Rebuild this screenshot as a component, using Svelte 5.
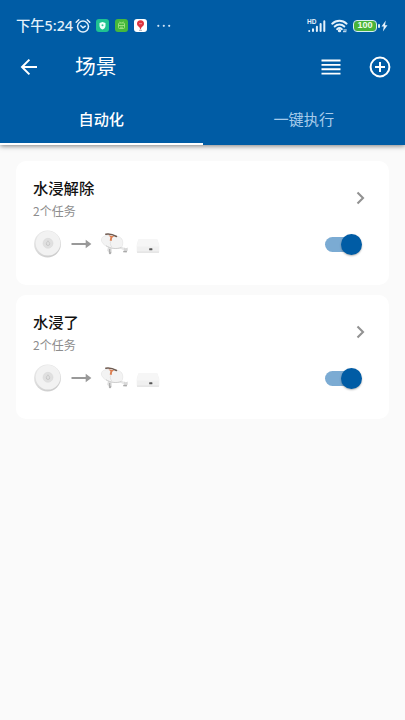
<script>
  let tab = $state(0);
  let scenes = $state([
    { name: '水浸解除', tasks: '2个任务', on: true },
    { name: '水浸了', tasks: '2个任务', on: true }
  ]);
</script>

<div class="screen">
  <header>
    <div class="status">
      <span class="time">下午5:24</span>
      <svg class="alarm" width="16" height="16" viewBox="0 0 16 16" fill="none" stroke="#e4f1fb" stroke-width="1.5" stroke-linecap="round">
        <circle cx="8" cy="8.6" r="5.5" />
        <path d="M1.200 4.200 3.800 1.700M14.800 4.200 12.200 1.700M5.800 7.800 8 9.800l2.300-1.600" />
      </svg>
      <svg class="app" width="13" height="13" viewBox="0 0 13 13">
        <rect width="13" height="13" rx="3" fill="#1fc291" />
        <path d="M6.500 3 9.500 4v2.700c0 2-1.500 3.100-3 3.800-1.500-.7-3-1.800-3-3.800V4z" fill="#f1fffa" />
        <circle cx="6.500" cy="6.200" r="1" fill="#35c596" />
      </svg>
      <svg class="app" width="13" height="13" viewBox="0 0 13 13">
        <rect width="13" height="13" rx="3" fill="#45b83b" />
        <g fill="none" stroke="#a5e286" stroke-width=".9">
          <rect x="3.500" y="4" width="6" height="5.500" rx="1" />
          <path d="M3.500 6.500h6M4.700 2.700l.6 1.200M8.300 2.700l-.6 1.200M5 8.200h3" />
        </g>
      </svg>
      <svg class="app" width="13" height="13" viewBox="0 0 13 13">
        <rect width="13" height="13" rx="3" fill="#fff" />
        <path d="M6.500 1.200a3.500 3.500 0 0 1 3.500 3.500c0 1.700-1.200 2.700-2.400 3.500L6.500 10.700 5.400 8.200C4.200 7.400 3 6.400 3 4.700a3.500 3.500 0 0 1 3.500-3.500z" fill="#dc3440" />
        <path d="M5 4.700h3" stroke="#f0939a" />
        <path d="M5 11.300h3" stroke="#8f8f98" stroke-width=".8" />
      </svg>
      <svg class="dots" width="15" height="4" viewBox="0 0 15 4" fill="#cfe4f6">
        <circle cx="1.300" cy="1.800" r="1.100" /><circle cx="6.800" cy="1.800" r="1.100" /><circle cx="12.200" cy="1.800" r="1.100" />
      </svg>
      <span class="grow"></span>
      <span class="signal">
        <i>HD</i>
        <svg width="19" height="14" viewBox="0 0 19 14" stroke="#e4f1fb" stroke-width="2" stroke-linecap="round">
          <path d="M2.200 12.100v-.1M6 12.100v-1.800M9.900 12.100V7.700M13.600 12.100V5M17.300 12.100V2.300" />
        </svg>
      </span>
      <svg class="wifi" width="17" height="14" viewBox="0 0 17 14" fill="none" stroke="#e4f1fb" stroke-width="1.900" stroke-linecap="round">
        <path d="M1.200 4.700c4.100-4 10.300-4 14.400 0M3.700 7.500c2.700-2.700 6.900-2.700 9.600 0M6.100 10.200c1.400-1.300 3.400-1.300 4.800 0" />
        <circle cx="8.500" cy="11.700" r=".7" fill="#e4f1fb" />
        <path d="M12.800 11h2.600M12.400 12.700h2.600" stroke-width="1" />
      </svg>
      <span class="battery"><b>100</b></span>
      <svg class="bolt" width="7" height="12" viewBox="0 0 7 12"><path d="M4.800.5.500 6.500h2.300L1.900 11.500 6.500 5.200H4z" fill="#e4f1fb" /></svg>
    </div>

    <div class="bar">
      <svg width="18" height="18" viewBox="0 0 18 18" fill="none" stroke="#fff" stroke-width="2">
        <path d="M17 9H2.200M9.400 1.600 2 9l7.400 7.400" />
      </svg>
      <h1>场景</h1>
      <span class="grow"></span>
      <svg width="20" height="16" viewBox="0 0 20 16" stroke="#fff" stroke-width="1.900">
        <path d="M.5 1.500h19M.5 5.900h19M.5 10.200h19M.5 14.600h19" />
      </svg>
      <svg class="add" width="22" height="22" viewBox="0 0 22 22" fill="none" stroke="#fff" stroke-width="2">
        <circle cx="11" cy="11" r="9.400" /><path d="M11 6v10M6 11h10" />
      </svg>
    </div>

    <nav>
      <button class:active={tab === 0} onclick={() => (tab = 0)}>自动化</button>
      <button class:active={tab === 1} onclick={() => (tab = 1)}>一键执行</button>
    </nav>
  </header>

  <main>
    {#each scenes as scene, i}
      <section>
        <div class="top">
          <div>
            <h2>{scene.name}</h2>
            <p>{scene.tasks}</p>
          </div>
          <svg class="chev" width="9" height="14" viewBox="0 0 9 14" fill="none" stroke="#929292" stroke-width="2.100"><path d="M1.500 1.600 7 7l-5.500 5.400" /></svg>
        </div>
        <div class="flow">
          <svg width="28" height="28" viewBox="0 0 28 28">
            <defs>
              <linearGradient id="disc{i}" x1="0" y1="0" x2=".7" y2="1">
                <stop offset="0" stop-color="#ececec" /><stop offset="1" stop-color="#cccccc" />
              </linearGradient>
            </defs>
            <circle cx="14.500" cy="14" r="13.400" fill="url(#disc{i})" />
            <circle cx="15" cy="13.300" r="12.300" fill="#f2f2f2" />
            <circle cx="15" cy="13.300" r="5" fill="#e0e0e0" stroke="#d6d6d6" stroke-width=".5" />
            <path d="M15 10.800c-1 1.300-1.700 2-1.700 3a1.700 1.700 0 0 0 3.400 0c0-1-.8-1.700-1.700-3z" fill="none" stroke="#c2c2c2" stroke-width=".8" />
          </svg>
          <svg class="arrow" width="21" height="10" viewBox="0 0 21 10"><path d="M.5 3.900h14.200V.8L20.400 5l-5.700 4.200V6.100H.5z" fill="#999" /></svg>
          <svg class="valve" width="30" height="24" viewBox="0 0 30 24">
            <path d="M8 15l-.8 3.500 2.500 3.300 2.200-.8-.3-5z" fill="#dedede" />
            <path d="M9.700 17v4" stroke="#a9a9a9" stroke-width="1.200" />
            <path d="M20 14l5 2.300-.8 2.200-5.200-2.500z" fill="#e6e6e6" />
            <path d="M3.500 4.500C7 2.500 10 4 12 4.800c3-1.300 7.500-.6 9.500 1.700 1.800 2.200 1.800 7-.2 9-2.500 1.700-8.500 1.300-11.500-.2C6 14.500 3 12.500 1.700 9.500 1 7.500 1.500 5.500 3.500 4.500z" fill="#f3f3f3" stroke="#e0e0e0" stroke-width=".6" />
            <path d="M11.500 8c-1.700 2-1.500 5 .3 7" fill="none" stroke="#dadada" stroke-width=".7" />
            <path d="M6 13.700c4 2.800 10 3.700 15.300 1.800" fill="none" stroke="#c6c6c6" stroke-width=".8" />
            <path d="M8.500 3.200l5.700 1-2 1.600-.6 3.200-1.900-.6.700-3.200z" fill="#dc7f52" />
            <path d="M5.800 2.200c3.500-.6 7 .2 10.700 2.300" fill="none" stroke="#6e5a50" stroke-width="1.500" stroke-linecap="round" />
            <path d="M24 15.600q1.800 1.200 3.700 0v3l-1.500 2-2.200-.7z" fill="#d8d8d8" />
            <path d="M23.200 19.600h3.700" stroke="#aaa" stroke-width="1.400" />
            <circle cx="10" cy="21" r="1.200" fill="#b0b0b0" />
          </svg>
          <svg class="hub" width="24" height="14" viewBox="0 0 24 14">
            <path d="M2.300.6h19.200L23.300 6v6.300q0 1-1 1H1.700q-1 0-1-1V6z" fill="#f0f0f0" />
            <path d="M2.300.6h19.200L23.300 7.500H.7z" fill="#f6f6f6" />
            <path d="M1 13.200h22" stroke="#d6d6d6" stroke-width=".8" />
            <rect x="13.200" y="9.300" width="3.200" height="1.900" rx=".5" fill="#555" />
          </svg>
          <span class="grow"></span>
          <button class="switch" class:on={scene.on} role="switch" aria-checked={scene.on} aria-label={scene.name} onclick={() => (scene.on = !scene.on)}><i></i></button>
        </div>
      </section>
    {/each}
  </main>
</div>

<style>
  :global(body) { margin: 0; }
  .screen {
    width: 405px; height: 720px; overflow: hidden; background: #fafafa;
    font-family: "Noto Sans", "Noto Sans CJK SC", sans-serif;
    display: flex; flex-direction: column;
  }
  svg { display: block; flex: none; }
  .grow { flex: 1; }
  button { border: 0; padding: 0; margin: 0; font: inherit; background: none; }
  header { background: #005ca5; height: 145px; flex: none; box-shadow: 0 1px 5px rgba(0, 0, 0, .5); display: flex; flex-direction: column; }
  .status { height: 44px; padding: 7px 16px 0; box-sizing: border-box; display: flex; align-items: center; color: #e4f1fb; }
  .time { width: 58px; font: 500 14.300px/20px "Noto Sans", "Noto Sans CJK SC", sans-serif; white-space: nowrap; }
  .alarm { margin-left: 1px; margin-right: 5px; }
  .app { margin-right: 6px; }
  .dots { margin-left: 4px; }
  .signal { display: flex; position: relative; margin-right: 5px; }
  .signal i { position: absolute; left: 0; top: 0; font: 700 6.500px/6px "Liberation Sans", sans-serif; }
  .wifi { margin-right: 5px; }
  .battery {
    width: 24px; height: 12px; box-sizing: border-box; border: 1.500px solid #d7efef; border-radius: 4px;
    background: #49b338; background-clip: padding-box; display: flex; align-items: center; justify-content: center; position: relative;
  }
  .battery b { font: 700 9px/9px "Liberation Sans", sans-serif; color: #effbe9; }
  .battery::after { content: ""; position: absolute; right: -3.500px; top: 3px; width: 1.500px; height: 4px; border-radius: 1px; background: #d7efef; }
  .bolt { margin-left: 4px; margin-right: 1px; }
  .bar { height: 45px; padding: 0 14px 0 20px; display: flex; align-items: center; }
  h1 { margin: 0 0 3px 37px; color: #fff; font: 400 20.800px/30px "Noto Sans CJK SC", sans-serif; }
  .add { margin-left: 28px; }
  nav { flex: 1; display: flex; }
  nav button { flex: 1; box-sizing: border-box; padding-top: 3px; border-bottom: 2px solid transparent; color: #a6cbea; font: 400 15.200px/20px "Noto Sans CJK SC", sans-serif; }
  nav .active { color: #fff; border-bottom-color: #fff; font-weight: 500; }
  main { padding: 16px; display: flex; flex-direction: column; gap: 10px; }
  section { height: 124px; box-sizing: border-box; padding: 15px 27px 0 17px; background: #fff; border-radius: 10px; }
  .top { display: flex; justify-content: space-between; align-items: flex-start; }
  h2 { margin: 0; color: #111; font: 500 15.300px/22px "Noto Sans CJK SC", sans-serif; }
  p { margin: 5px 0 0; color: #8d8d8d; font: 400 12px/16px "Noto Sans CJK SC", sans-serif; }
  .chev { margin: 15px -3px 0 0; }
  .flow { margin-top: 11px; height: 28px; display: flex; align-items: center; }
  .arrow { margin-left: 10px; }
  .valve { margin-left: 8px; }
  .hub { margin-left: 6px; margin-top: 3px; }
  .switch { width: 37px; height: 21px; display: flex; align-items: center; position: relative; }
  .switch::before { content: ""; width: 33px; height: 15px; border-radius: 8px; background: #b5b5b5; }
  .switch i { position: absolute; left: 0; top: 0; width: 21px; height: 21px; border-radius: 50%; background: #eee; box-shadow: 0 1px 2px rgba(0, 0, 0, .3); }
  .switch.on::before { background: #7babd3; }
  .switch.on i { left: 16px; background: #005ca5; }
</style>
